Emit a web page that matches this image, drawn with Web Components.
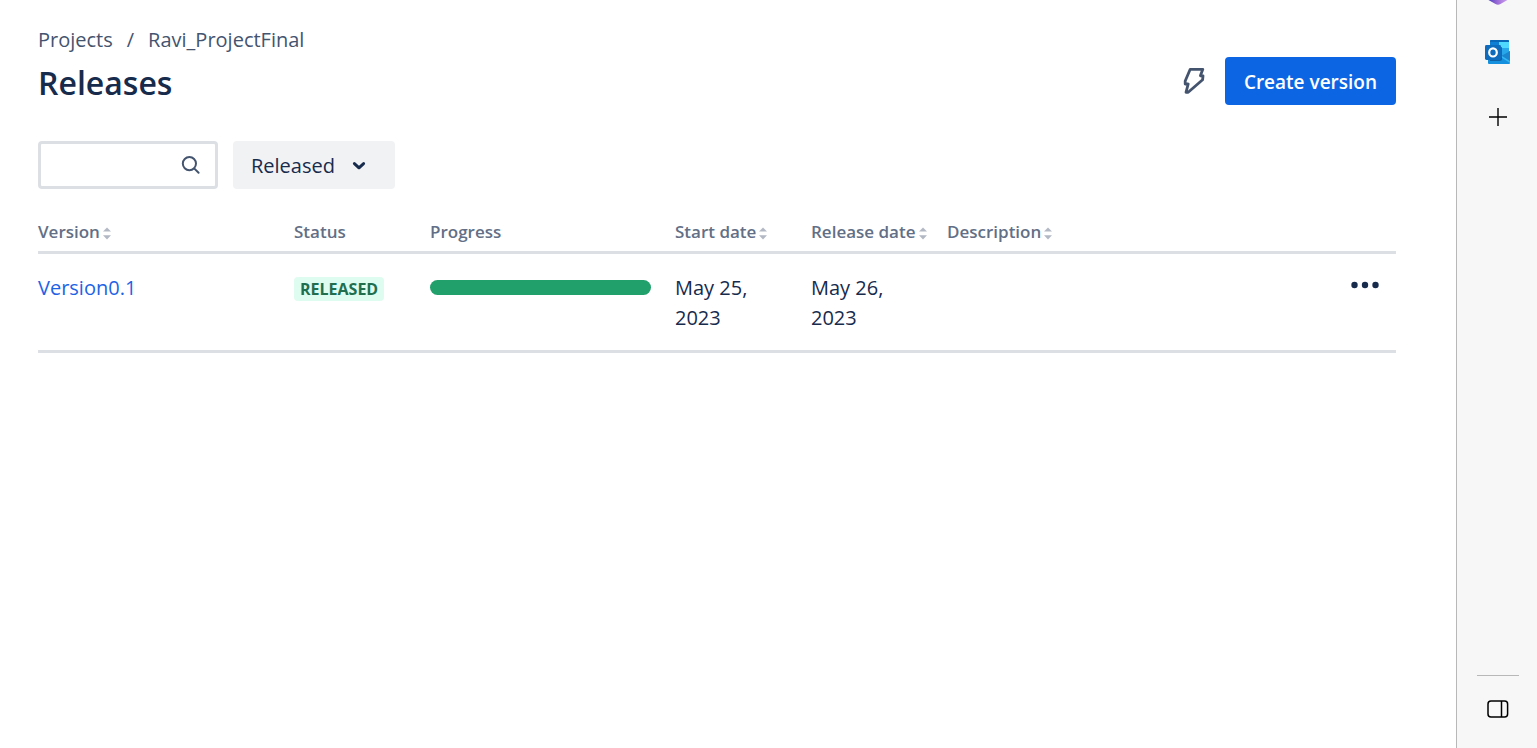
<!DOCTYPE html>
<html lang="en">
<head>
<meta charset="utf-8">
<title>Releases</title>
<style>
  body { margin: 0; background: #fff; color: #172b4d; font: 20px/30px "Open Sans", "Noto Sans", sans-serif; }
</style>
</head>
<body>
<app-shell>
  <page-header>
    <a slot="crumb" href="#projects">Projects</a>
    <span slot="crumb" aria-hidden="true">/</span>
    <a slot="crumb" href="#ravi">Ravi_ProjectFinal</a>
    <span slot="title">Releases</span>
    <span slot="action">Create version</span>
  </page-header>
  <release-filters></release-filters>
  <release-table></release-table>
  <edge-sidebar slot="side"></edge-sidebar>
</app-shell>

<script>
const define = (name, html) => {
  const template = document.createElement('template');
  template.innerHTML = html;
  customElements.define(name, class extends HTMLElement {
    constructor() {
      super();
      this.attachShadow({ mode: 'open' }).append(template.content.cloneNode(true));
    }
  });
};

define('app-shell', `
<style>
  :host { display: flex; min-height: 100vh; }
  main { flex: 1; min-width: 0; padding: 25px 60px 0 38px; }
</style>
<main><slot></slot></main>
<slot name="side"></slot>`);

define('page-header', `
<style>
  :host { display: block; }
  nav { display: flex; gap: 14px; margin-bottom: 2px; color: #44546f; line-height: 30px; }
  ::slotted(a) { color: inherit; text-decoration: none; }
  .row { display: flex; align-items: center; justify-content: space-between; height: 48px; }
  h1 { margin: 0; padding-top: 4px; font-size: 32px; line-height: 44px; font-weight: 600; }
  .actions { display: flex; align-items: center; gap: 8px; }
  button { border: 0; font: inherit; cursor: pointer; }
  .bolt { display: flex; align-items: center; justify-content: center; width: 46px; height: 48px; padding: 0; background: none; color: #44546f; }
  .primary { height: 48px; padding: 2px 19px 0; border-radius: 4px; background: #0c66e4; color: #fff; font-size: 19px; font-weight: 600; }
</style>
<nav aria-label="Breadcrumb"><slot name="crumb"></slot></nav>
<div class="row">
  <h1><slot name="title"></slot></h1>
  <div class="actions">
    <button class="bolt" type="button" aria-label="Automation">
      <svg width="22" height="28" viewBox="0 0 22 28" fill="none" stroke="currentColor" stroke-width="2.8" stroke-linejoin="round"><path d="M7.2 2.3H19.8L17.4 8.8H20L19.6 12.8L5.2 25.3H3L5.2 17H2.2V14Z"/></svg>
    </button>
    <button class="primary" type="button"><slot name="action"></slot></button>
  </div>
</div>`);

define('release-filters', `
<style>
  :host { display: flex; gap: 15px; margin-top: 36px; }
  .search { display: flex; align-items: center; box-sizing: border-box; width: 180px; height: 48px; padding: 0 14px 0 9px; border: 3px solid #dcdfe4; border-radius: 4px; color: #44546f; }
  input { flex: 1; min-width: 0; padding: 0; border: 0; outline: 0; background: none; font: inherit; }
  button { display: flex; align-items: center; gap: 17px; width: 162px; height: 48px; padding: 2px 18px 0; border: 0; border-radius: 4px; background: #f1f2f4; color: #172b4d; font: inherit; font-weight: 500; }
</style>
<label class="search">
  <input type="text" aria-label="Search versions">
  <svg width="20" height="20" viewBox="0 0 20 20" fill="none" stroke="currentColor" stroke-width="2" stroke-linecap="round"><circle cx="8.4" cy="8.6" r="6.6"/><path d="M13.4 13.6L17.6 17.8"/></svg>
</label>
<button type="button" aria-haspopup="listbox">Released
  <svg width="14" height="10" viewBox="0 0 14 10" fill="none" stroke="currentColor" stroke-width="3" stroke-linecap="round" stroke-linejoin="round"><path d="M2.4 2.6L7 6.8L11.6 2.6"/></svg>
</button>`);

define('sort-icon', `
<style>
  :host { display: inline-block; margin-left: 3px; vertical-align: -2px; color: #b3b9c4; }
  svg { display: block; }
</style>
<svg width="8" height="13" viewBox="0 0 8 13" fill="currentColor"><path d="M0 4.6L4 0.4L8 4.6ZM0 8.2H8L4 12.4Z"/></svg>`);

define('status-badge', `
<style>
  :host { display: inline-block; padding: 0 6px; border-radius: 4px; background: #dffcf0; color: #216e4e; font-size: 16px; line-height: 24px; font-weight: 700; }
</style>
<slot></slot>`);

define('progress-bar', `
<style>
  :host { display: block; height: 15px; border-radius: 8px; background: #22a06b; }
</style>`);

define('release-table', `
<style>
  :host { display: block; margin-top: 24px; }
  table { width: 100%; table-layout: fixed; border-collapse: separate; border-spacing: 0; }
  th, td { padding: 0 24px 0 0; border-bottom: 3px solid #dcdfe4; text-align: left; vertical-align: top; }
  th { height: 38px; padding-right: 0; color: #626f86; font-size: 17px; line-height: 38px; font-weight: 600; white-space: nowrap; }
  td { padding-top: 19px; padding-bottom: 17px; line-height: 30px; }
  .version { width: 256px; }
  .short { width: 136px; }
  .progress { width: 245px; }
  .menu { width: 100px; }
  td:nth-child(2) { padding-top: 23px; line-height: 24px; padding-right: 0; }
  td:nth-child(3) { padding-top: 26px; }
  td:last-child { padding: 18px 14px 0 0; text-align: right; }
  a { color: #1d63e6; text-decoration: none; }
  status-badge { vertical-align: top; }
  button { width: 34px; height: 26px; padding: 0; border: 0; background: none; color: #172b4d; }
  button svg { display: block; margin: 0 auto; }
</style>
<table>
  <thead>
    <tr>
      <th class="version" scope="col">Version<sort-icon></sort-icon></th>
      <th class="short" scope="col">Status</th>
      <th class="progress" scope="col">Progress</th>
      <th class="short" scope="col">Start date<sort-icon></sort-icon></th>
      <th class="short" scope="col">Release date<sort-icon></sort-icon></th>
      <th scope="col">Description<sort-icon></sort-icon></th>
      <th class="menu" scope="col" aria-label="Actions"></th>
    </tr>
  </thead>
  <tbody>
    <tr>
      <td><a href="#version">Version0.1</a></td>
      <td><status-badge>RELEASED</status-badge></td>
      <td><progress-bar role="progressbar" aria-label="Progress" aria-valuenow="100"></progress-bar></td>
      <td>May 25, 2023</td>
      <td>May 26, 2023</td>
      <td></td>
      <td><button type="button" aria-label="More actions"><svg width="28" height="8" viewBox="0 0 28 8" fill="currentColor"><circle cx="3.5" cy="4" r="3.2"/><circle cx="14" cy="4" r="3.2"/><circle cx="24.5" cy="4" r="3.2"/></svg></button></td>
    </tr>
  </tbody>
</table>`);

define('edge-sidebar', `
<style>
  :host { display: flex; flex-direction: column; align-items: center; box-sizing: border-box; width: 81px; flex: none; padding-left: 2px; border-left: 1px solid #b8b8b8; background: #f7f7f7; }
  button { display: flex; align-items: center; justify-content: center; width: 48px; height: 48px; margin-bottom: 17px; padding: 0; border: 0; background: none; color: #000; }
  .peek { height: 5px; margin-bottom: 23px; align-items: flex-start; }
  hr { width: 42px; margin: auto 0 9px; border: 0; border-top: 1px solid #b8b8b8; }
  .panel { margin-bottom: 15px; }
</style>
<button class="peek" type="button" aria-label="Microsoft 365">
  <svg width="24" height="5" viewBox="0 0 24 5"><defs><linearGradient id="g"><stop offset="0" stop-color="#4a3fc0"/><stop offset=".35" stop-color="#8a60d0"/><stop offset=".65" stop-color="#b07ee0"/><stop offset="1" stop-color="#c9a0f0"/></linearGradient></defs><path d="M2.5 0H21.5L14.5 4Q12 5.6 9.5 4Z" fill="url(#g)"/></svg>
</button>
<button type="button" aria-label="Outlook">
  <svg width="26" height="24" viewBox="0 0 26 24"><path d="M6 0H23Q24 0 24 1V12H5V1Q5 0 6 0Z" fill="#28a8ea"/><path d="M5 2H14V12H5Z" fill="#0f7fd6"/><path d="M14 2H24V11H14Z" fill="#50d9ff"/><path d="M6 0H23Q24 0 24 1V2H5V1Q5 0 6 0Z" fill="#0a67b8"/><path d="M14 8H24V12L17 16H14Z" fill="#28a8ea"/><path d="M3 12L15 17L25 11V23Q25 24 24 24H4Q3 24 3 23Z" fill="#1490df"/><path d="M15 16.5L25 11V23Z" fill="#35b8f1"/><path d="M16.5 15.7L25 11V21Z" fill="#1a86cf"/><path d="M7 7H17V18.5Q17 21 14.5 21H5V9Z" fill="#0a4a82" opacity=".65"/><rect x="0" y="5" width="16" height="15" rx="1.4" fill="#0f6cbd"/><ellipse cx="8" cy="12.4" rx="3.8" ry="4.1" fill="none" stroke="#fff" stroke-width="2.2"/></svg>
</button>
<button type="button" aria-label="Add">
  <svg width="18" height="18" viewBox="0 0 18 18" stroke="currentColor" stroke-width="1.4"><path d="M0 9H18M9 0V18"/></svg>
</button>
<hr>
<button class="panel" type="button" aria-label="Toggle sidebar">
  <svg width="22" height="18" viewBox="0 0 22 18" fill="none" stroke="currentColor" stroke-width="1.5"><rect x="1" y="1" width="19.6" height="16" rx="3"/><path d="M14.5 1V17"/></svg>
</button>`);
</script>
</body>
</html>
